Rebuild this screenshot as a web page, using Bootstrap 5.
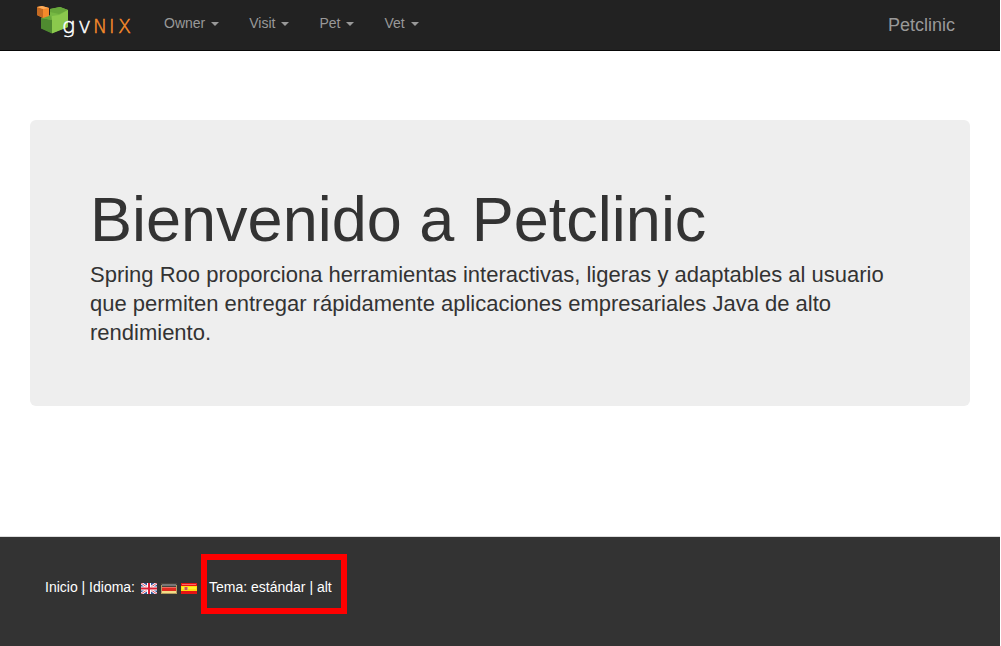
<!DOCTYPE html>
<html lang="es">
<head>
<meta charset="utf-8">
<meta name="viewport" content="width=device-width, initial-scale=1">
<title>Bienvenido a Petclinic</title>
<link href="https://cdn.jsdelivr.net/npm/bootstrap@5.3.0/dist/css/bootstrap.min.css" rel="stylesheet">
<style>
  body { font: 14px/20px "Liberation Sans", Arial, sans-serif; color: #333; padding-right: 1px; }
  .topbar { background: #222; border-bottom: 1px solid #080808; padding: 0 45px 0 37px; min-height: 51px; }
  .topbar .navbar-nav .nav-link { color: #999; font-size: 14px; line-height: 20px; padding: 13px 15px 17px; }
  .topbar .navbar-nav .nav-link:hover { color: #fff; }
  .topbar .dropdown-toggle::after { border-width: 4px 4px 0; margin-left: 6px; vertical-align: 2px; }
  .app-name { color: #999; font-size: 18px; line-height: 20px; padding: 15px 0; }
  .welcome { background: #eee; border-radius: 6px; margin: 69px 30px 130px; padding: 68px 60px 59px; }
  .welcome h1 { font-size: 63px; line-height: 63px; font-weight: 400; margin-bottom: 9px; }
  .welcome p { font-size: 22px; line-height: 29px; }
  .page-foot { background: #333; border-top: 1px solid #ddd; color: #fff; padding: 17px 45px 32px; }
  .page-foot a { color: #fff; text-decoration: none; }
  .lang-links { padding-top: 23px; }
  .lang-label { padding-right: 2px; }
  .lang-links svg { display: block; margin-top: 3px; }
  .theme-box { border: 6px solid #f00; padding: 17px 9px 11px 2px; }
</style>
</head>
<body class="min-vh-100 d-flex flex-column">
<nav class="topbar navbar navbar-expand d-flex align-items-start">
  <a href="#" class="me-3" aria-label="gvNIX">
    <svg class="d-block" width="96" height="44" viewBox="37 0 96 44">
      <path d="M50 9l10-2 8 3v17l-16 6-11-5V18l9-1z" fill="#76b843"/>
      <path d="M50 9l10-2 8 3-9 4-9-2z" fill="#68a83b"/>
      <path d="M41 18l11 2v13.500l-11-5z" fill="#4f8a30"/>
      <path d="M41 18l9-3 2 5z" fill="#68a83b"/>
      <path d="M52 16l7-1 9-5v17l-16 6.500z" fill="#8bc94d"/>
      <path d="M37 7l5-1 7 2v8l-6 2-6-3z" fill="#f58a2b"/>
      <path d="M37 7l6 2v9l-6-3z" fill="#c46a22"/>
      <path d="M37 7l5-1 7 2-6 1z" fill="#ffad5b"/>
      <g font-family="DejaVu Sans, sans-serif" font-weight="200" stroke-width=".5">
        <text x="62" y="33" font-size="22" fill="#fff" stroke="#fff">g</text>
        <text x="78" y="33" font-size="22" fill="#fff" stroke="#fff">v</text>
        <text x="93" y="33" font-size="19" fill="#f58a2b" stroke="#f58a2b">N</text>
        <text x="109" y="33" font-size="19" fill="#f58a2b" stroke="#f58a2b">I</text>
        <text x="118" y="33" font-size="19" fill="#f58a2b" stroke="#f58a2b">X</text>
      </g>
    </svg>
  </a>
  <ul class="navbar-nav flex-row">
    <li class="nav-item dropdown"><a class="nav-link dropdown-toggle" href="#" role="button" data-bs-toggle="dropdown">Owner</a></li>
    <li class="nav-item dropdown"><a class="nav-link dropdown-toggle" href="#" role="button" data-bs-toggle="dropdown">Visit</a></li>
    <li class="nav-item dropdown"><a class="nav-link dropdown-toggle" href="#" role="button" data-bs-toggle="dropdown">Pet</a></li>
    <li class="nav-item dropdown"><a class="nav-link dropdown-toggle" href="#" role="button" data-bs-toggle="dropdown">Vet</a></li>
  </ul>
  <a href="#" class="app-name text-decoration-none ms-auto">Petclinic</a>
</nav>
<main class="welcome">
  <h1>Bienvenido a Petclinic</h1>
  <p class="mb-0">Spring Roo proporciona herramientas interactivas, ligeras y adaptables al usuario que permiten entregar rápidamente aplicaciones empresariales Java de alto rendimiento.</p>
</main>
<footer class="page-foot flex-grow-1">
  <div class="d-flex align-items-start gap-1">
    <div class="lang-links d-flex align-items-center gap-1">
      <div class="lang-label"><a href="#">Inicio</a> | Idioma:</div>
      <a href="#" aria-label="English"><svg width="16" height="11" viewBox="0 0 16 11">
        <path fill="#35569c" d="M0 0h16v11H0z"/><path d="M0 0l16 11M16 0L0 11" stroke="#fff" stroke-width="2.6"/><path d="M0 0l16 11M16 0L0 11" stroke="#e04a5c"/>
        <path d="M8 0v11M0 5.500h16" stroke="#fff" stroke-width="4"/><path d="M8 0v11M0 5.500h16" stroke="#d81e36" stroke-width="2"/></svg></a>
      <a href="#" aria-label="Deutsch"><svg width="16" height="11" viewBox="0 0 16 11">
        <path fill="#45433b" d="M0 0h16v4H0z"/><path fill="#e02a20" d="M0 4h16v4H0z"/><path fill="#d8b653" d="M0 8h16v3H0z"/>
        <path d="M1 1h14v2H1z" fill="#777"/><path d="M1 4h14v1H1z" fill="#f16a60"/><path d="M1 8h14v2H1z" fill="#f3dc86"/><path d="M.5 2v8.500h15V2" fill="none" stroke="#b49d60"/></svg></a>
      <a href="#" aria-label="Español"><svg width="16" height="11" viewBox="0 0 16 11">
        <path fill="#e51414" d="M0 0h16v11H0z"/><path fill="#f66" d="M1 1h14v1H1z"/><path fill="#fd1" d="M0 3h16v5H0z"/><path fill="#fff02a" d="M1 4h14v2H1z"/>
        <path d="M3 4h1v3H3zM6 4h1v3H6z" fill="#c9a27a"/><path d="M4 4h2v3H4z" fill="#d5504a"/></svg></a>
    </div>
    <div class="theme-box">Tema: <a href="#">estándar</a> | <a href="#">alt</a></div>
  </div>
</footer>
<script src="https://cdn.jsdelivr.net/npm/bootstrap@5.3.0/dist/js/bootstrap.bundle.min.js"></script>
</body>
</html>
